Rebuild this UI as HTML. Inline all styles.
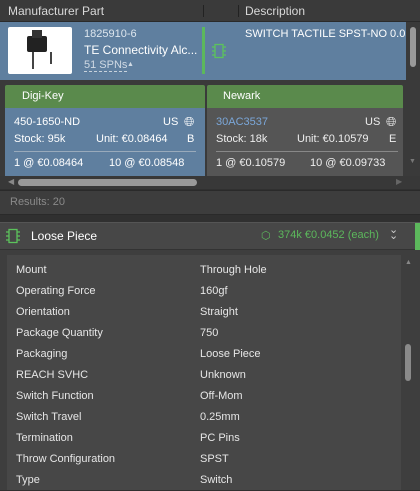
<!DOCTYPE html><html><head><style>
*{margin:0;padding:0;box-sizing:border-box}
body{width:420px;height:490px;background:#303030;font-family:"Liberation Sans",sans-serif;font-size:11px;color:#e6e6e6;position:relative;overflow:hidden}
.a{position:absolute;white-space:nowrap}
</style></head><body>
<div class="a" style="left:0;top:0;width:420px;height:22px;background:#3a3a3a;border-bottom:1px solid #2a2a2a"></div>
<div class="a" style="left:8px;top:4px;color:#d8d8d8;font-size:12px">Manufacturer Part</div>
<div class="a" style="left:203px;top:5px;width:1px;height:12px;background:#222"></div>
<div class="a" style="left:238px;top:5px;width:1px;height:12px;background:#222"></div>
<div class="a" style="left:245px;top:4px;color:#d8d8d8;font-size:12px">Description</div>
<div class="a" style="left:0;top:22px;width:406px;height:58px;background:#5f7f9f;overflow:hidden">
<div class="a" style="left:245px;top:6px;color:#fff">SWITCH TACTILE SPST-NO 0.05A</div></div>
<div class="a" style="left:8px;top:27px;width:64px;height:47px;background:#fff;border-radius:2px"></div>
<div class="a" style="left:27px;top:36px;width:20px;height:16px;background:#222;border-radius:2px"></div>
<div class="a" style="left:32px;top:30px;width:10px;height:8px;background:#333"></div>
<div class="a" style="left:32px;top:52px;width:2px;height:17px;background:#444"></div>
<div class="a" style="left:50px;top:52px;width:2px;height:12px;background:#444"></div>
<div class="a" style="left:84px;top:28px;color:#dde6ee">1825910-6</div>
<div class="a" style="left:84px;top:43px;font-size:12px;color:#fff">TE Connectivity Alc...</div>
<div class="a" style="left:84px;top:59px;color:#d0dae4;border-bottom:1px dashed #c8d2dc">51 SPNs</div><div class="a" style="left:127px;top:61px;font-size:7px;color:#d0dae4">▲</div>
<div class="a" style="left:202px;top:27px;width:3px;height:47px;background:#5cb85c"></div>
<svg class="a" style="left:211px;top:43px" width="16" height="16"><rect x="4" y="1.5" width="8" height="13" fill="none" stroke="#5cc35c" stroke-width="1.3"/><path d="M1 4h3M1 8h3M1 12h3M12 4h3M12 8h3M12 12h3" stroke="#5cc35c" stroke-width="1.3"/></svg>
<div class="a" style="left:406px;top:22px;width:14px;height:58px;background:#3a3a3a"></div>
<div class="a" style="left:410px;top:27px;width:6px;height:40px;background:#999;border-radius:3px"></div>
<div class="a" style="left:0;top:80px;width:406px;height:96px;background:#3a3a3a"></div>
<div class="a" style="left:5px;top:85px;width:200px;height:23px;background:#5a8a4c;border-radius:2px 2px 0 0"></div>
<div class="a" style="left:22px;top:90px;color:#fff">Digi-Key</div>
<div class="a" style="left:5px;top:108px;width:200px;height:68px;background:#5f7f9f"></div>
<div class="a" style="left:14px;top:116px;color:#fff">450-1650-ND</div>
<div class="a" style="left:163px;top:116px;color:#fff">US</div>
<div class="a" style="left:184px;top:114px;font-size:13px;color:#fff">🌐︎</div>
<div class="a" style="left:14px;top:133px;color:#fff">Stock: 95k</div>
<div class="a" style="left:96px;top:133px;color:#fff">Unit: €0.08464</div>
<div class="a" style="left:187px;top:133px;color:#fff">B</div>
<div class="a" style="left:14px;top:151px;width:182px;height:1px;background:#9ab"></div>
<div class="a" style="left:14px;top:157px;color:#fff">1 @ €0.08464</div>
<div class="a" style="left:109px;top:157px;color:#fff">10 @ €0.08548</div>
<div class="a" style="left:207px;top:85px;width:196px;height:23px;background:#5a8a4c;border-radius:2px 2px 0 0"></div>
<div class="a" style="left:223px;top:90px;color:#fff">Newark</div>
<div class="a" style="left:207px;top:108px;width:196px;height:68px;background:#555"></div>
<div class="a" style="left:216px;top:116px;color:#7ba7d9">30AC3537</div>
<div class="a" style="left:365px;top:116px;color:#eee">US</div>
<div class="a" style="left:386px;top:114px;font-size:13px;color:#eee">🌐︎</div>
<div class="a" style="left:216px;top:133px;color:#eee">Stock: 18k</div>
<div class="a" style="left:297px;top:133px;color:#eee">Unit: €0.10579</div>
<div class="a" style="left:389px;top:133px;color:#eee">E</div>
<div class="a" style="left:216px;top:151px;width:182px;height:1px;background:#888"></div>
<div class="a" style="left:216px;top:157px;color:#eee">1 @ €0.10579</div>
<div class="a" style="left:310px;top:157px;color:#eee">10 @ €0.09733</div>
<div class="a" style="left:406px;top:80px;width:14px;height:96px;background:#3a3a3a"></div>
<div class="a" style="left:409px;top:158px;font-size:7px;color:#777">▼</div>
<div class="a" style="left:0;top:176px;width:420px;height:13px;background:#383838"></div>
<div class="a" style="left:8px;top:177px;font-size:8px;color:#888">◀</div>
<div class="a" style="left:18px;top:179px;width:179px;height:7px;background:#999;border-radius:4px"></div>
<div class="a" style="left:396px;top:177px;font-size:8px;color:#666">▶</div>
<div class="a" style="left:0;top:190px;width:420px;height:25px;background:#3d3d3d;border-top:1px solid #2a2a2a;border-bottom:1px solid #2a2a2a"></div>
<div class="a" style="left:10px;top:196px;color:#8a8a8a">Results: 20</div>
<div class="a" style="left:0;top:222px;width:420px;height:28px;background:#474747;border-top:1px solid #555;border-bottom:1px solid #333"></div>
<svg class="a" style="left:5px;top:228px" width="16" height="16"><rect x="4" y="1.5" width="8" height="13" fill="none" stroke="#5cc35c" stroke-width="1.3"/><path d="M1 4h3M1 8h3M1 12h3M12 4h3M12 8h3M12 12h3" stroke="#5cc35c" stroke-width="1.3"/></svg>
<div class="a" style="left:31px;top:229px;color:#fff;font-size:12px">Loose Piece</div>
<div class="a" style="left:261px;top:229px;color:#5cb85c;font-size:11px">⬡</div>
<div class="a" style="left:278px;top:229px;color:#5cb85c">374k  €0.0452 (each)</div>
<div class="a" style="left:389px;top:227px;color:#ccc;font-size:11px;line-height:6px">⌄<br>⌄</div>
<div class="a" style="left:415px;top:223px;width:5px;height:27px;background:#5cb85c"></div>
<div class="a" style="left:0;top:250px;width:420px;height:240px;background:#3e3e3e"></div>
<div class="a" style="left:7px;top:255px;width:394px;height:235px;background:#474747"></div>
<div class="a" style="left:405px;top:259px;font-size:7px;color:#888">▲</div>
<div class="a" style="left:405px;top:344px;width:6px;height:37px;background:#8a8a8a;border-radius:3px"></div>
<div style="position:absolute;left:16px;top:260px;line-height:21px;color:#e6e6e6">Mount<br>Operating Force<br>Orientation<br>Package Quantity<br>Packaging<br>REACH SVHC<br>Switch Function<br>Switch Travel<br>Termination<br>Throw Configuration<br>Type</div>
<div style="position:absolute;left:200px;top:260px;line-height:21px;color:#e6e6e6">Through Hole<br>160gf<br>Straight<br>750<br>Loose Piece<br>Unknown<br>Off-Mom<br>0.25mm<br>PC Pins<br>SPST<br>Switch</div>
</body></html>
